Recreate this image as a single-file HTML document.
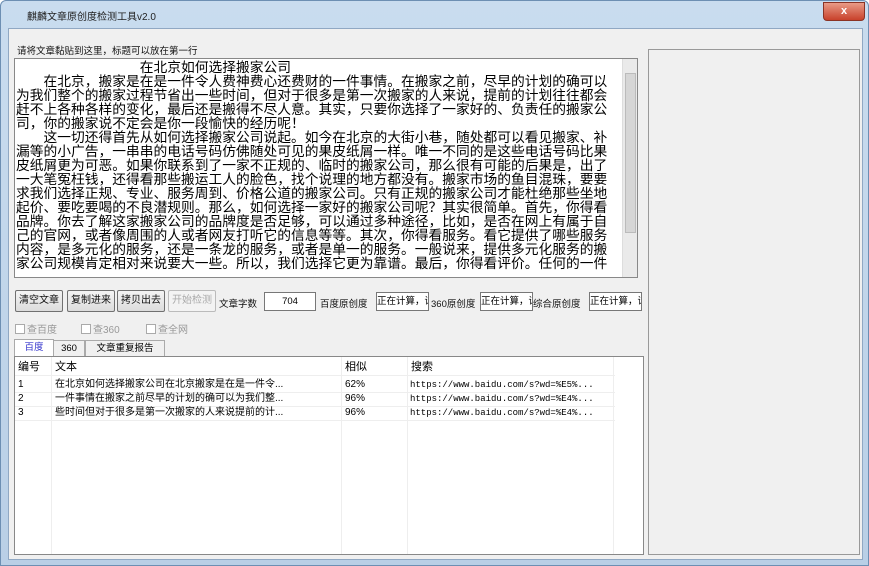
<!DOCTYPE html><html><head><meta charset="utf-8"><style>
body{margin:0;width:869px;height:566px;overflow:hidden;background:#fff;font-family:"Liberation Sans","Noto Sans CJK SC",sans-serif;}
.win{position:absolute;left:0;top:0;width:867px;height:564px;background:linear-gradient(#c9dcef,#b9cfe6);border:1px solid #6d8fb3;border-radius:6px 6px 0 0;}
.title{position:absolute;left:26px;top:7px;font-size:10px;color:#222;}
.close{position:absolute;left:822px;top:1px;width:40px;height:17px;background:linear-gradient(#e99b87,#c8412b);border:1px solid #8a3325;border-radius:0 0 4px 4px;color:#fff;font-size:11px;text-align:center;line-height:16px;font-weight:bold}
.client{position:absolute;left:7px;top:27px;width:853px;height:530px;background:#f0f0f0;border:1px solid #90a8c3;}
.abs{position:absolute}
.ta{position:absolute;left:5px;top:29px;width:622px;height:218px;background:#fff;border:1px solid #888;overflow:hidden}
.ta p{margin:0;font-size:13.75px;line-height:14px;color:#000;white-space:nowrap;padding-left:1px;font-family:"Noto Sans CJK SC",sans-serif}
.sb{position:absolute;right:0;top:0;width:14px;height:218px;background:#eaeaea;border-left:1px solid #ddd}
.btn{position:absolute;top:261px;height:20px;border:1px solid #707070;border-radius:2px;background:linear-gradient(#f4f4f4,#dcdcdc);font-size:10px;line-height:20px;text-align:center;color:#111}
.lbl{position:absolute;font-size:9.5px;color:#111}
.inp{position:absolute;top:263px;height:17px;background:#fff;border:1px solid #777;font-size:9.5px;line-height:17px;white-space:nowrap;overflow:hidden}
.cb{position:absolute;top:292px;font-size:10px;color:#999}
.cb i{display:inline-block;width:8px;height:8px;border:1px solid #aaa;margin-right:2px;vertical-align:-1px;background:#fff}
.tab{position:absolute;top:311px;height:16px;font-size:9.5px;line-height:16px;text-align:center;border:1px solid #aaa;border-bottom:none;background:#f0f0f0}
.list{position:absolute;left:5px;top:327px;width:628px;height:197px;background:#fff;border:1px solid #888}
.row{position:absolute;left:0;width:600px;height:14px;font-size:10px;line-height:14px;border-bottom:1px solid #eee;white-space:nowrap}
.row span{position:absolute}
.mono{font-family:"Liberation Mono",monospace;font-size:9px}
</style></head><body>
<div class="win">
<div class="title">麒麟文章原创度检测工具v2.0</div>
<div class="close">x</div>
<div class="client">
<div class="lbl" style="left:8px;top:14px">请将文章黏贴到这里，标题可以放在第一行</div>
<div class="ta">
<p>　　　　　　　　　在北京如何选择搬家公司</p>
<p>　　在北京，搬家是在是一件令人费神费心还费财的一件事情。在搬家之前，尽早的计划的确可以</p>
<p>为我们整个的搬家过程节省出一些时间，但对于很多是第一次搬家的人来说，提前的计划往往都会</p>
<p>赶不上各种各样的变化，最后还是搬得不尽人意。其实，只要你选择了一家好的、负责任的搬家公</p>
<p>司，你的搬家说不定会是你一段愉快的经历呢！</p>
<p>　　这一切还得首先从如何选择搬家公司说起。如今在北京的大街小巷，随处都可以看见搬家、补</p>
<p>漏等的小广告，一串串的电话号码仿佛随处可见的果皮纸屑一样。唯一不同的是这些电话号码比果</p>
<p>皮纸屑更为可恶。如果你联系到了一家不正规的、临时的搬家公司，那么很有可能的后果是，出了</p>
<p>一大笔冤枉钱，还得看那些搬运工人的脸色，找个说理的地方都没有。搬家市场的鱼目混珠，要要</p>
<p>求我们选择正规、专业、服务周到、价格公道的搬家公司。只有正规的搬家公司才能杜绝那些坐地</p>
<p>起价、要吃要喝的不良潜规则。那么，如何选择一家好的搬家公司呢？其实很简单。首先，你得看</p>
<p>品牌。你去了解这家搬家公司的品牌度是否足够，可以通过多种途径，比如，是否在网上有属于自</p>
<p>己的官网，或者像周围的人或者网友打听它的信息等等。其次，你得看服务。看它提供了哪些服务</p>
<p>内容，是多元化的服务，还是一条龙的服务，或者是单一的服务。一般说来，提供多元化服务的搬</p>
<p>家公司规模肯定相对来说要大一些。所以，我们选择它更为靠谱。最后，你得看评价。任何的一件</p>
<div class="sb"><div class="abs" style="left:2px;top:14px;width:9px;height:158px;background:#d6d6d6;border:1px solid #bbb"></div></div>
</div>
<div class="btn" style="left:6px;width:46px">清空文章</div>
<div class="btn" style="left:58px;width:46px">复制进来</div>
<div class="btn" style="left:108px;width:46px">拷贝出去</div>
<div class="btn" style="left:159px;width:46px;color:#aaa;border-color:#bbb;background:#f3f3f3">开始检测</div>
<div class="lbl" style="left:210px;top:267px">文章字数</div>
<div class="inp" style="left:255px;width:50px;text-align:center">704</div>
<div class="lbl" style="left:311px;top:267px">百度原创度</div>
<div class="inp" style="left:367px;width:51px">正在计算，请</div>
<div class="lbl" style="left:422px;top:267px">360原创度</div>
<div class="inp" style="left:471px;width:51px">正在计算，请</div>
<div class="lbl" style="left:524px;top:267px">综合原创度</div>
<div class="inp" style="left:580px;width:51px">正在计算，请</div>
<div class="cb" style="left:6px"><i></i>查百度</div>
<div class="cb" style="left:72px"><i></i>查360</div>
<div class="cb" style="left:137px"><i></i>查全网</div>
<div class="tab" style="left:5px;width:38px;color:#33c;background:#fff;top:310px;height:17px">百度</div>
<div class="tab" style="left:44px;width:30px">360</div>
<div class="tab" style="left:76px;width:78px">文章重复报告</div>
<div class="list">
<div class="row" style="top:2px;height:16px;line-height:16px;font-size:11px"><span style="left:3px">编号</span><span style="left:40px">文本</span><span style="left:330px">相似</span><span style="left:396px">搜索</span></div>
<div class="row" style="top:21px"><span style="left:3px">1</span><span style="left:40px">在北京如何选择搬家公司在北京搬家是在是一件令...</span><span style="left:330px">62%</span><span class="mono" style="left:395px">https://www.baidu.com/s?wd=%E5%...</span></div>
<div class="row" style="top:35px"><span style="left:3px">2</span><span style="left:40px">一件事情在搬家之前尽早的计划的确可以为我们整...</span><span style="left:330px">96%</span><span class="mono" style="left:395px">https://www.baidu.com/s?wd=%E4%...</span></div>
<div class="row" style="top:49px"><span style="left:3px">3</span><span style="left:40px">些时间但对于很多是第一次搬家的人来说提前的计...</span><span style="left:330px">96%</span><span class="mono" style="left:395px">https://www.baidu.com/s?wd=%E4%...</span></div>
<div class="abs" style="left:36px;top:0;width:1px;height:197px;background:#eee"></div>
<div class="abs" style="left:326px;top:0;width:1px;height:197px;background:#eee"></div>
<div class="abs" style="left:392px;top:0;width:1px;height:197px;background:#eee"></div>
<div class="abs" style="left:598px;top:0;width:1px;height:197px;background:#eee"></div>
</div>
<div class="abs" style="left:639px;top:20px;width:210px;height:504px;border:1px solid #999;background:#f0f0f0"></div>
</div></div>
</body></html>
